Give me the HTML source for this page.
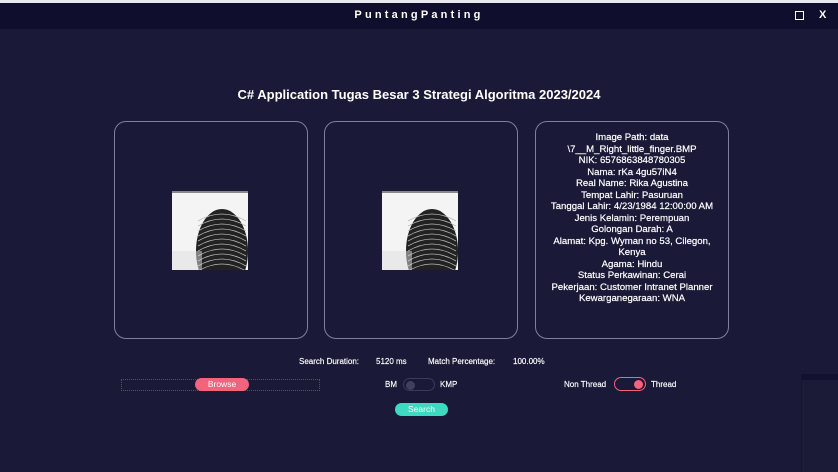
<!DOCTYPE html>
<html><head><meta charset="utf-8"><style>
*{margin:0;padding:0;box-sizing:border-box}
body{width:838px;height:472px;background:#1a1937;font-family:"Liberation Sans","DejaVu Sans",sans-serif;color:#fff;position:relative;overflow:hidden}
.top{position:absolute;left:0;top:0;width:838px;height:3px;background:#e8e8f0}
.bar{position:absolute;left:0;top:3px;width:838px;height:26px;background:#0f0f2d}
.t{position:absolute;top:9px;left:0;width:838px;text-align:center;font-size:11px;font-weight:bold;letter-spacing:3.2px}
.ab{position:absolute;font-size:11px;font-weight:bold}
h1{position:absolute;top:87px;left:0;width:838px;text-align:center;font-size:13px;font-weight:bold}
.p{position:absolute;top:121px;height:218px;width:194px;border:1px solid #80809a;border-radius:12px}
.fp{position:absolute;top:191px;width:76px;height:79px}
.info{position:absolute;left:536px;top:132px;width:192px;text-align:center;font-size:9.6px;line-height:11.5px;-webkit-text-stroke:0.2px #fff}
.s{position:absolute;font-size:8px;-webkit-text-stroke:0.15px #fff}
.tg{position:absolute;border-radius:7px}
.btn{position:absolute;border-radius:7px;font-size:8.5px;text-align:center;line-height:13px}
</style></head><body>
<div class="top"></div><div class="bar"></div>
<div class="t">PuntangPanting</div>
<div class="ab" style="left:795px;top:11px;width:9px;height:9px;border:1.5px solid #fff"></div>
<div class="ab" style="left:819px;top:9px">X</div>
<h1>C# Application Tugas Besar 3 Strategi Algoritma 2023/2024</h1>
<div class="p" style="left:114px"></div>
<div class="p" style="left:324px"></div>
<div class="p" style="left:535px"></div>
<svg class="fp" style="left:172px" viewBox="0 0 76 79"><rect width="76" height="79" fill="#f4f4f4"/><rect width="76" height="2" fill="#888"/><ellipse cx="50" cy="60" rx="26" ry="42" fill="#222"/><g stroke="#b8b8b8" stroke-width="0.8" fill="none"><path d="M26 30q24-14 48 0M26 35q24-14 48 0M26 40q24-14 48 0M26 45q24-14 48 0M26 50q24-14 48 0M26 55q24-14 48 0M26 60q24-14 48 0M26 65q24-14 48 0M26 70q24-14 48 0M26 75q24-14 48 0M26 80q24-14 48 0"/></g><rect x="0" y="60" width="30" height="19" fill="#ddd" opacity="0.5"/></svg>
<svg class="fp" style="left:382px" viewBox="0 0 76 79"><rect width="76" height="79" fill="#f4f4f4"/><rect width="76" height="2" fill="#888"/><ellipse cx="50" cy="60" rx="26" ry="42" fill="#222"/><g stroke="#b8b8b8" stroke-width="0.8" fill="none"><path d="M26 30q24-14 48 0M26 35q24-14 48 0M26 40q24-14 48 0M26 45q24-14 48 0M26 50q24-14 48 0M26 55q24-14 48 0M26 60q24-14 48 0M26 65q24-14 48 0M26 70q24-14 48 0M26 75q24-14 48 0M26 80q24-14 48 0"/></g><rect x="0" y="60" width="30" height="19" fill="#ddd" opacity="0.5"/></svg>
<div class="info">Image Path: data<br>\7__M_Right_little_finger.BMP<br>NIK: 6576863848780305<br>Nama: rKa 4gu57iN4<br>Real Name: Rika Agustina<br>Tempat Lahir: Pasuruan<br>Tanggal Lahir: 4/23/1984 12:00:00 AM<br>Jenis Kelamin: Perempuan<br>Golongan Darah: A<br>Alamat: Kpg. Wyman no 53, Cilegon,<br>Kenya<br>Agama: Hindu<br>Status Perkawinan: Cerai<br>Pekerjaan: Customer Intranet Planner<br>Kewarganegaraan: WNA</div>
<div class="s" style="left:299px;top:357px">Search Duration:</div>
<div class="s" style="left:376px;top:357px">5120 ms</div>
<div class="s" style="left:428px;top:357px">Match Percentage:</div>
<div class="s" style="left:513px;top:357px">100.00%</div>
<div style="position:absolute;left:121px;top:379px;width:199px;height:12px;border:1px dotted #555"></div>
<div class="btn" style="left:195px;top:378px;width:54px;background:#f2637c">Browse</div>
<div class="s" style="left:385px;top:380px">BM</div>
<div class="tg" style="left:403px;top:378px;width:32px;height:13px;border:1px solid #3a3a5a"><div style="position:absolute;left:2px;top:1.5px;width:9px;height:9px;border-radius:50%;background:#3f3f5f"></div></div>
<div class="s" style="left:440px;top:380px">KMP</div>
<div class="s" style="left:564px;top:380px">Non Thread</div>
<div class="tg" style="left:614px;top:377px;width:32px;height:14px;border:1px solid #f2637c"><div style="position:absolute;left:19px;top:2px;width:9px;height:9px;border-radius:50%;background:#f2637c"></div></div>
<div class="s" style="left:651px;top:380px">Thread</div>
<div class="btn" style="left:395px;top:403px;width:53px;background:#3dd9c1">Search</div>
<div style="position:absolute;left:801px;top:374px;width:37px;height:98px;background:#1b1a37;border-left:1px solid #151530;border-top:6px solid #121230"></div>
</body></html>
